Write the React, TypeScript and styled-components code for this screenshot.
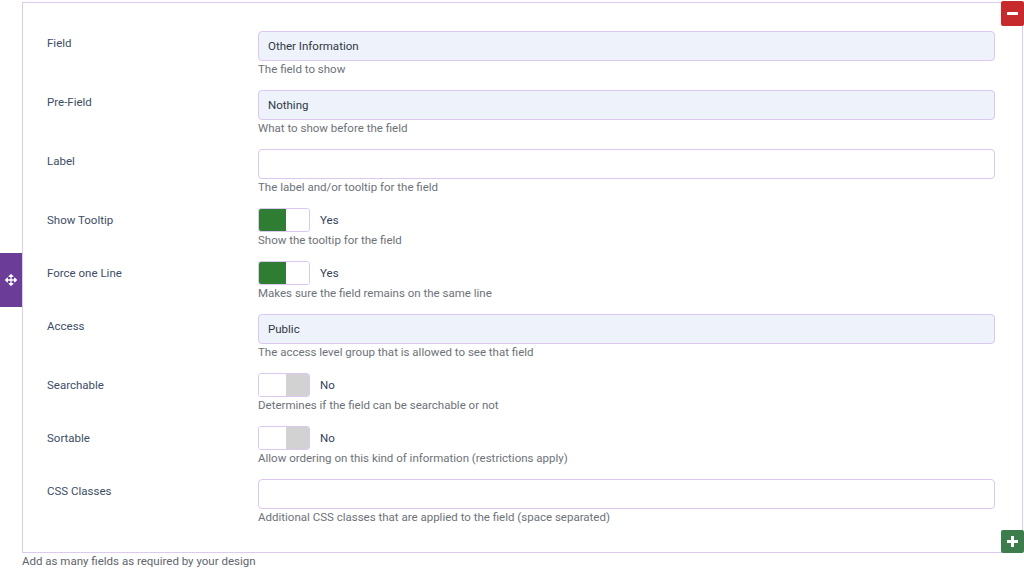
import React from "react";
import styled, { createGlobalStyle } from "styled-components";
import { FaArrowsAlt } from "react-icons/fa";

const Global = createGlobalStyle`
  html, body { margin: 0; padding: 0; background: #ffffff; }
  body { font-family: Roboto, "Noto Sans", Arial, sans-serif; font-size: 11.5px; }
  * { box-sizing: border-box; }
`;

const Page = styled.div`
  width: 1024px;
  height: 570px;
  padding-top: 2px;
  padding-left: 22px;
  overflow: hidden;
`;

const Card = styled.div`
  position: relative;
  width: 1001px;
  border: 1px solid #dccbee;
  padding: 28px 27px 27px 24px;
  display: flex;
  flex-direction: column;
  gap: 13px;
`;

const Row = styled.div`
  display: grid;
  grid-template-columns: 211px 1fr;
`;

const Label = styled.div`
  padding-top: 4px;
  line-height: 16px;
  font-size: 11.5px;
  color: #3d4d66;
`;

const Control = styled.div`
  display: flex;
  flex-direction: column;
`;

const Input = styled.div<{ $filled?: boolean }>`
  height: 30px;
  border: 1px solid #dac8ef;
  border-radius: 4px;
  background: ${(p) => (p.$filled ? "#eef3fb" : "#ffffff")};
  padding: 0 9px;
  display: flex;
  align-items: center;
  font-size: 11.5px;
  color: #2e3744;
`;

const Desc = styled.div`
  line-height: 16px;
  font-size: 11.5px;
  color: #6d7279;
`;

const ToggleLine = styled.div`
  display: flex;
  align-items: center;
  gap: 10px;
  height: 24px;
`;

const Toggle = styled.div<{ $on: boolean }>`
  width: 52px;
  height: 24px;
  border: 1px solid #dac8ef;
  border-radius: 3px;
  overflow: hidden;
  display: grid;
  grid-template-columns: 27px 1fr;
`;

const Half = styled.div<{ $color: string }>`
  background: ${(p) => p.$color};
`;

const ToggleText = styled.span`
  font-size: 11.5px;
  color: #33415a;
`;

const CornerButton = styled.div<{ $color: string; $pos: "top" | "bottom" }>`
  position: absolute;
  right: -2px;
  ${(p) => (p.$pos === "top" ? "top: -2px; height: 25px;" : "bottom: -1px; height: 23px;")}
  width: 23px;
  background: ${(p) => p.$color};
  border-radius: 2px;
  display: flex;
  align-items: center;
  justify-content: center;
`;

const Handle = styled.div`
  position: absolute;
  left: -23px;
  top: 250px;
  width: 22px;
  height: 54px;
  background: #6b3d99;
  display: flex;
  align-items: center;
  justify-content: center;
  color: #ffffff;
`;

const Footer = styled.div`
  line-height: 16px;
  font-size: 11.5px;
  color: #60656d;
`;

type RowDef =
  | { kind: "input"; label: string; value: string; filled: boolean; desc: string }
  | { kind: "toggle"; label: string; on: boolean; desc: string };

const rows: RowDef[] = [
  { kind: "input", label: "Field", value: "Other Information", filled: true, desc: "The field to show" },
  { kind: "input", label: "Pre-Field", value: "Nothing", filled: true, desc: "What to show before the field" },
  { kind: "input", label: "Label", value: "", filled: false, desc: "The label and/or tooltip for the field" },
  { kind: "toggle", label: "Show Tooltip", on: true, desc: "Show the tooltip for the field" },
  { kind: "toggle", label: "Force one Line", on: true, desc: "Makes sure the field remains on the same line" },
  { kind: "input", label: "Access", value: "Public", filled: true, desc: "The access level group that is allowed to see that field" },
  { kind: "toggle", label: "Searchable", on: false, desc: "Determines if the field can be searchable or not" },
  { kind: "toggle", label: "Sortable", on: false, desc: "Allow ordering on this kind of information (restrictions apply)" },
  { kind: "input", label: "CSS Classes", value: "", filled: false, desc: "Additional CSS classes that are applied to the field (space separated)" },
];

export default function App() {
  return (
    <Page>
      <Global />
      <Card>
        <Handle>
          <FaArrowsAlt size={12} />
        </Handle>
        <CornerButton $color="#c62a2c" $pos="top">
          <svg width="11" height="3" viewBox="0 0 11 3">
            <rect x="0" y="0" width="11" height="3" rx="0.5" fill="#fff" />
          </svg>
        </CornerButton>
        <CornerButton $color="#3c7c4d" $pos="bottom">
          <svg width="11" height="11" viewBox="0 0 11 11">
            <rect x="0" y="4" width="11" height="3" fill="#fff" />
            <rect x="4" y="0" width="3" height="11" fill="#fff" />
          </svg>
        </CornerButton>
        {rows.map((r) => (
          <Row key={r.label}>
            <Label>{r.label}</Label>
            <Control>
              {r.kind === "input" ? (
                <Input $filled={r.filled}>{r.value}</Input>
              ) : (
                <ToggleLine>
                  <Toggle $on={r.on}>
                    <Half $color={r.on ? "#2f7d33" : "#ffffff"} />
                    <Half $color={r.on ? "#ffffff" : "#d2d2d2"} />
                  </Toggle>
                  <ToggleText>{r.on ? "Yes" : "No"}</ToggleText>
                </ToggleLine>
              )}
              <Desc>{r.desc}</Desc>
            </Control>
          </Row>
        ))}
      </Card>
      <Footer>Add as many fields as required by your design</Footer>
    </Page>
  );
}
